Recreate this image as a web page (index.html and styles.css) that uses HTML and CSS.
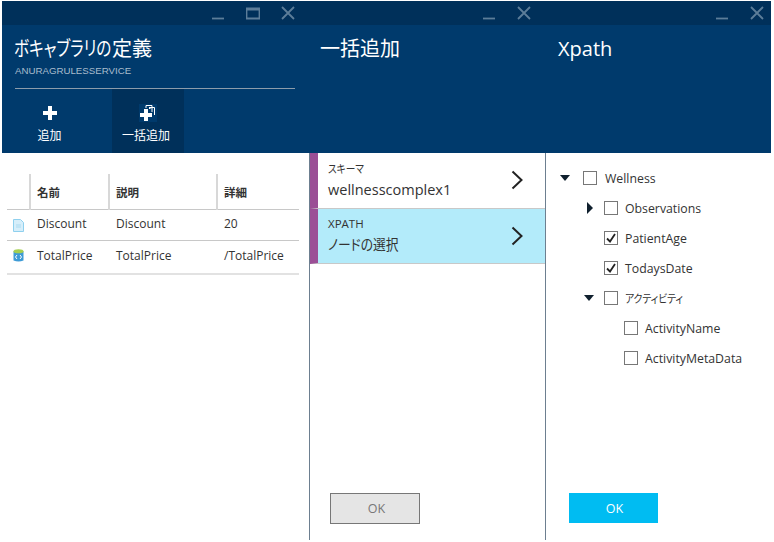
FILE: index.html
```html
<!DOCTYPE html>
<html lang="ja">
<head>
    <meta charset="UTF-8">
    <meta name="viewport" content="width=device-width, initial-scale=1.0">
    <title>ボキャブラリの定義</title>
    <link rel="stylesheet" href="styles.css">
</head>
<body>
    <div class="blades">
        <!-- ボキャブラリの定義 -->
        <section class="blade blade-vocab">
            <div class="titlebar">
                <svg class="win-icon" viewBox="0 0 14 14"><path d="M1 12.500h12" /></svg>
                <svg class="win-icon" viewBox="0 0 14 14"><path d="M.5 2.500h13v10H.5z" /><path class="thick" d="M1 3.500h12" /></svg>
                <svg class="win-icon" viewBox="0 0 14 14"><path d="M1 1l12 12M13 1L1 13" /></svg>
            </div>
            <header class="blade-head">
                <h1><span class="title-kana">ボキャブラリの</span>定義</h1>
                <div class="subtitle">ANURAGRULESSERVICE</div>
                <div class="commands">
                    <div class="command">
                        <span class="command-icon">
                            <svg width="14" height="14" viewBox="0 0 14 14"><path fill="#fff" d="M5 0h4v5h5v4H9v5H5V9H0V5h5z" /></svg>
                        </span>
                        <span>追加</span>
                    </div>
                    <div class="command active">
                        <span class="command-icon">
                            <svg width="18" height="18" viewBox="0 0 18 18">
                                <rect width="18" height="18" fill="#003a6c" />
                                <path fill="none" stroke="#fff" d="M7 4V1.500h6V8M10 4.500h1.500M10 3.500h5.500V11" />
                                <path fill="#fff" d="M5 5h4v4h4v4H9v4H5v-4H1V9h4z" />
                            </svg>
                        </span>
                        <span>一括追加</span>
                    </div>
                </div>
            </header>
            <div class="blade-body">
                <table class="vocab-table">
                    <thead>
                        <tr>
                            <th class="col-icon"></th>
                            <th class="col-name">名前</th>
                            <th class="col-desc">説明</th>
                            <th>詳細</th>
                        </tr>
                    </thead>
                    <tbody>
                        <tr>
                            <td>
                                <svg class="row-icon" viewBox="0 0 11 13">
                                    <path fill="#d6eefa" stroke="#8fd0ee" d="M.5.500h7l3 3v9H.5z" />
                                    <path fill="#a9d9f0" d="M3 5.500h5v1H3zM3 7.500h5v1H3z" />
                                </svg>
                            </td>
                            <td>Discount</td>
                            <td>Discount</td>
                            <td>20</td>
                        </tr>
                        <tr>
                            <td>
                                <svg class="row-icon" viewBox="0 0 11 13">
                                    <path fill="#3e9bd6" d="M.5 2.500h10v9q-5 2-10 0z" />
                                    <ellipse cx="5.500" cy="2.200" rx="5" ry="2" fill="#a4cf50" />
                                    <path fill="none" stroke="#fff" d="M4 6L2.500 8 4 10M7 6l1.500 2L7 10" />
                                </svg>
                            </td>
                            <td>TotalPrice</td>
                            <td>TotalPrice</td>
                            <td>/TotalPrice</td>
                        </tr>
                    </tbody>
                </table>
            </div>
        </section>

        <!-- 一括追加 -->
        <section class="blade blade-bulk">
            <div class="titlebar">
                <svg class="win-icon" viewBox="0 0 14 14"><path d="M1 12.500h12" /></svg>
                <svg class="win-icon" viewBox="0 0 14 14"><path d="M1 1l12 12M13 1L1 13" /></svg>
            </div>
            <header class="blade-head">
                <h1>一括追加</h1>
            </header>
            <div class="blade-body">
                <div class="selector">
                    <div class="selector-text">
                        <div class="selector-label"><span class="squeeze squeeze-schema">スキーマ</span></div>
                        <div class="selector-value">wellnesscomplex1</div>
                    </div>
                    <svg class="chevron" viewBox="0 0 12 20"><path d="M1.500 1.500l9 8.500-9 8.500" /></svg>
                </div>
                <div class="selector selected">
                    <div class="selector-text">
                        <div class="selector-label">XPATH</div>
                        <div class="selector-value"><span class="squeeze squeeze-node">ノードの選択</span></div>
                    </div>
                    <svg class="chevron" viewBox="0 0 12 20"><path d="M1.500 1.500l9 8.500-9 8.500" /></svg>
                </div>
                <div class="actions">
                    <button class="btn btn-disabled">OK</button>
                </div>
            </div>
        </section>

        <!-- Xpath -->
        <section class="blade blade-xpath">
            <div class="titlebar">
                <svg class="win-icon" viewBox="0 0 14 14"><path d="M1 12.500h12" /></svg>
                <svg class="win-icon" viewBox="0 0 14 14"><path d="M1 1l12 12M13 1L1 13" /></svg>
            </div>
            <header class="blade-head">
                <h1>Xpath</h1>
            </header>
            <div class="blade-body">
                <ul class="tree">
                    <li class="level-0"><span class="arrow arrow-down"></span><span class="check"></span>Wellness</li>
                    <li class="level-1"><span class="arrow arrow-right"></span><span class="check"></span>Observations</li>
                    <li class="level-1"><span class="arrow"></span><span class="check checked"><svg viewBox="0 0 12 12"><path d="M2 6.500l3 3 5-7.500" /></svg></span>PatientAge</li>
                    <li class="level-1"><span class="arrow"></span><span class="check checked"><svg viewBox="0 0 12 12"><path d="M2 6.500l3 3 5-7.500" /></svg></span>TodaysDate</li>
                    <li class="level-1"><span class="arrow arrow-down"></span><span class="check"></span><span class="squeeze squeeze-activity">アクティビティ</span></li>
                    <li class="level-2"><span class="arrow"></span><span class="check"></span>ActivityName</li>
                    <li class="level-2"><span class="arrow"></span><span class="check"></span>ActivityMetaData</li>
                </ul>
                <div class="actions">
                    <button class="btn btn-primary">OK</button>
                </div>
            </div>
        </section>
    </div>
</body>
</html>
```

FILE: styles.css
```css
html, body {
    margin: 0;
    padding: 0;
}

body {
    width: 774px;
    height: 542px;
    overflow: hidden;
    background: #fff;
    color: #333;
    font-family: 'Open Sans', 'Noto Sans CJK JP', sans-serif;
    font-size: 12px;
    font-feature-settings: "palt";
}

.blades {
    display: flex;
    height: 539px;
    margin: 1px 3px 0 2px;
}

.blade {
    display: flex;
    flex-direction: column;
    box-sizing: border-box;
}

.blade-vocab {
    width: 308px;
}

.blade-bulk {
    width: 236px;
}

.blade-xpath {
    flex: 1;
}

.titlebar {
    display: flex;
    justify-content: flex-end;
    align-items: center;
    gap: 21px;
    height: 24px;
    padding-right: 15px;
    background: #00305a;
}

.blade-xpath .titlebar {
    padding-right: 7px;
}

.win-icon {
    width: 14px;
    height: 14px;
    fill: none;
    stroke: #5c7d99;
    stroke-width: 1.8;
}

.win-icon .thick {
    stroke-width: 2;
}

.blade-head {
    box-sizing: border-box;
    height: 128px;
    padding: 10px 0 0;
    background: #003a6c;
    color: #fff;
}

.blade-head h1 {
    margin: 0;
    font-size: 20px;
    font-weight: 400;
    line-height: 28px;
    white-space: nowrap;
}

.title-kana {
    display: inline-block;
    width: 98px;
    transform: scaleX(0.78);
    transform-origin: left center;
}

.blade-vocab .blade-head {
    padding-left: 12px;
}

.blade-bulk .blade-head {
    padding-left: 10px;
}

.blade-xpath .blade-head {
    padding-left: 12px;
}

.subtitle {
    margin: 0 0 0 1px;
    color: #a9bccd;
    font-family: 'Liberation Sans', sans-serif;
    font-size: 9.700px;
    line-height: 16px;
}

.commands {
    display: flex;
    width: 280px;
    height: 64px;
    margin: 9px 0 0 1px;
    border-top: 1px solid #8c9cab;
}

.command {
    display: flex;
    flex-direction: column;
    align-items: center;
    box-sizing: border-box;
    width: 69px;
    padding-top: 15px;
    font-size: 12px;
}

.command.active {
    width: 72px;
    margin-left: 28px;
    background: #00305a;
}

.command-icon {
    display: flex;
    justify-content: center;
    align-items: center;
    height: 18px;
    margin-bottom: 4px;
}

.command.active span:last-child {
    margin-right: 4px;
}

.blade-body {
    display: flex;
    flex: 1;
    flex-direction: column;
    box-sizing: border-box;
    background: #fff;
}

.blade-vocab .blade-body {
    padding: 21px 0 0 5px;
    border-right: 1px solid #6d7f90;
}

.blade-bulk .blade-body {
    border-right: 1px solid #6d7f90;
}

.vocab-table {
    width: 292px;
    border-collapse: collapse;
    table-layout: fixed;
}

.vocab-table th {
    height: 35px;
    padding: 0 0 0 6px;
    border-left: 2px solid #d8d8d8;
    border-bottom: 1px solid #c8c8c8;
    font-size: 11.500px;
    font-weight: 700;
    text-align: left;
}

.vocab-table th.col-icon {
    width: 22px;
    padding: 0;
    border-left: 0;
}

.vocab-table th.col-name {
    width: 71px;
}

.vocab-table th.col-desc {
    width: 100px;
}

.vocab-table td {
    height: 31px;
    padding: 0 0 3px 7px;
    box-sizing: border-box;
    border-bottom: 1px solid #c8c8c8;
    white-space: nowrap;
}

.vocab-table tr:last-child td {
    height: 33px;
    padding-bottom: 2px;
    border-bottom: 2px solid #e2e2e2;
}

.vocab-table td:first-child {
    padding: 0 0 0 6px;
}

.row-icon {
    display: block;
    width: 11px;
    height: 13px;
}

.selector {
    display: flex;
    justify-content: space-between;
    align-items: center;
    box-sizing: border-box;
    height: 56px;
    padding: 0 22px 1px 10px;
    border-left: 8px solid #9b4f96;
    border-bottom: 1px solid #c8c8c8;
}

.selector.selected {
    height: 55px;
    background: #b3ebfa;
}

.selector-label {
    font-size: 11.500px;
    line-height: 16px;
}

.selector-value {
    margin-top: 3px;
    font-size: 14.500px;
    line-height: 20px;
}

.squeeze {
    display: inline-block;
    transform-origin: left center;
}

.squeeze-schema {
    transform: scaleX(0.84);
}

.squeeze-node {
    transform: scaleX(0.88);
}

.squeeze-activity {
    font-size: 11.500px;
    transform: scaleX(0.85);
}

.chevron {
    width: 12px;
    height: 20px;
    fill: none;
    stroke: #222;
    stroke-width: 2;
}

.actions {
    margin-top: auto;
    padding: 0 0 16px 20px;
}

.btn {
    display: block;
    box-sizing: border-box;
    width: 90px;
    height: 31px;
    padding: 0;
    border: 0;
    font-family: inherit;
    font-size: 12.500px;
}

.btn-disabled {
    padding-left: 3px;
    border: 1px solid #777;
    background: #e5e5e5;
    color: #777;
}

.btn-primary {
    width: 89px;
    height: 30px;
    margin-bottom: 1px;
    padding-left: 2px;
    background: #00bcf2;
    color: #fff;
}

.blade-xpath .actions {
    padding-left: 23px;
}

.tree {
    margin: 0;
    padding: 10px 0 0;
    list-style: none;
    font-size: 12.300px;
}

.tree li {
    display: flex;
    align-items: center;
    height: 30px;
    white-space: nowrap;
}

.level-0 {
    padding-left: 14px;
}

.level-1 {
    padding-left: 35px;
}

.level-2 {
    padding-left: 55px;
}

.arrow {
    display: block;
    flex: none;
    box-sizing: border-box;
    width: 23px;
}

.arrow-down::before {
    content: "";
    display: block;
    width: 0;
    height: 0;
    border-top: 6px solid #10202e;
    border-left: 5.500px solid transparent;
    border-right: 5.500px solid transparent;
}

.level-1 .arrow-down::before {
    margin-left: 3px;
}

.arrow-right::before {
    content: "";
    display: block;
    width: 0;
    height: 0;
    margin-left: 6px;
    border-left: 6px solid #10202e;
    border-top: 6px solid transparent;
    border-bottom: 6px solid transparent;
}

.check {
    display: block;
    flex: none;
    box-sizing: border-box;
    width: 14px;
    height: 14px;
    margin-right: 7px;
    border: 1px solid #777;
    background: #fff;
}

.level-0 .check {
    margin-right: 8px;
}

.check svg {
    display: block;
    width: 12px;
    height: 12px;
    fill: none;
    stroke: #222;
    stroke-width: 1.800;
}
```
